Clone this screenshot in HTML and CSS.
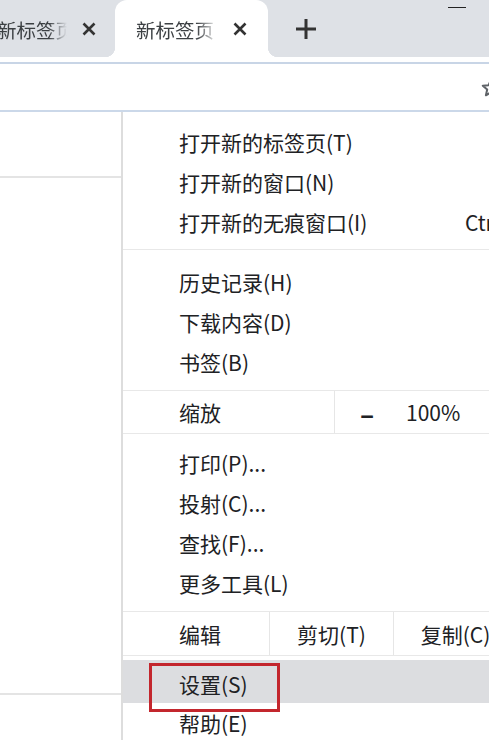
FILE: index.html
```html
<!DOCTYPE html>
<html lang="zh-CN">
<head>
<meta charset="utf-8">
<link rel="stylesheet" href="styles.css">
</head>
<body>
<div class="tabstrip">
  <div class="tab tab-inactive">
    <span class="title">新标签页</span>
    <svg class="close" viewBox="0 0 14 14" width="14" height="14"><path d="M1.5 1.5 L12.5 12.5 M12.5 1.5 L1.5 12.5" stroke="#333" stroke-width="2.6" stroke-linecap="butt"/></svg>
  </div>
  <div class="tab tab-active">
    <span class="title">新标签页</span>
    <svg class="close" viewBox="0 0 14 14" width="14" height="14"><path d="M1.5 1.5 L12.5 12.5 M12.5 1.5 L1.5 12.5" stroke="#333" stroke-width="2.6" stroke-linecap="butt"/></svg>
  </div>
  <div class="newtab">
    <svg viewBox="0 0 20 20" width="20" height="20"><path d="M10 0 V20 M0 10 H20" stroke="#333" stroke-width="3"/></svg>
  </div>
  <div class="spacer"></div>
  <div class="winctl"><span class="minimize"></span></div>
</div>
<div class="toolbar">
  <div class="omnibox">
    <svg class="star" viewBox="0 0 20 20" width="20" height="20"><path d="M10 1.8 L12.4 7.2 L18.2 7.7 L13.8 11.5 L15.1 17.3 L10 14.3 L4.9 17.3 L6.2 11.5 L1.8 7.7 L7.6 7.2 Z" fill="none" stroke="#5f6368" stroke-width="2" stroke-linejoin="round"/></svg>
  </div>
</div>
<div class="content">
  <div class="page">
    <div class="page-line first"></div>
    <div class="page-line second"></div>
  </div>
  <div class="menu">
    <div class="section first-section">
      <div class="item"><span class="label">打开新的标签页(T)</span><span class="shortcut">Ctrl+T</span></div>
      <div class="item"><span class="label">打开新的窗口(N)</span><span class="shortcut">Ctrl+N</span></div>
      <div class="item"><span class="label">打开新的无痕窗口(I)</span><span class="shortcut">Ctrl+Shift+N</span></div>
    </div>
    <div class="sep"></div>
    <div class="section second-section">
      <div class="item"><span class="label">历史记录(H)</span><span class="shortcut">▸</span></div>
      <div class="item"><span class="label">下载内容(D)</span><span class="shortcut">Ctrl+J</span></div>
      <div class="item"><span class="label">书签(B)</span><span class="shortcut">▸</span></div>
    </div>
    <div class="sep"></div>
    <div class="item zoom-row">
      <span class="cell cell-label zoom-label">缩放</span>
      <span class="cell zoom-minus">–</span>
      <span class="cell zoom-value">100%</span>
      <span class="cell zoom-plus">+</span>
    </div>
    <div class="sep"></div>
    <div class="section third-section">
      <div class="item"><span class="label">打印(P)...</span><span class="shortcut">Ctrl+P</span></div>
      <div class="item"><span class="label">投射(C)...</span></div>
      <div class="item"><span class="label">查找(F)...</span><span class="shortcut">Ctrl+F</span></div>
      <div class="item"><span class="label">更多工具(L)</span><span class="shortcut">▸</span></div>
    </div>
    <div class="sep"></div>
    <div class="item edit-row">
      <span class="cell cell-label edit-label">编辑</span>
      <span class="cell edit-btn">剪切(T)</span>
      <span class="cell edit-btn">复制(C)</span>
      <span class="cell edit-btn">粘贴(P)</span>
    </div>
    <div class="sep"></div>
    <div class="section last-section">
      <div class="item selected"><span class="label">设置(S)</span></div>
      <div class="item"><span class="label">帮助(E)</span><span class="shortcut">▸</span></div>
    </div>
  </div>
</div>
<div class="highlight-box"></div>
</body>
</html>
```
FILE: styles.css
```css
html, body {
  margin: 0;
  padding: 0;
  width: 489px;
  height: 740px;
  overflow: hidden;
  background: #ffffff;
  font-family: "Noto Sans CJK SC", "Noto Sans", sans-serif;
  color: #202124;
}

.tabstrip {
  height: 57px;
  background: #dee1e6;
  display: flex;
  align-items: stretch;
  position: relative;
}

.tab {
  display: flex;
  align-items: center;
  height: 57px;
  box-sizing: border-box;
  position: relative;
}

.title {
  font-size: 19.5px;
  color: #3c4043;
  white-space: nowrap;
  overflow: hidden;
  -webkit-mask-image: linear-gradient(to right, #000 74%, transparent 100%);
  mask-image: linear-gradient(to right, #000 74%, transparent 100%);
  line-height: 26px;
  padding-top: 2px;
}

.tab-inactive {
  width: 115px;
  padding-left: 0;
}

.tab-inactive .title {
  width: 70px;
  margin-left: -3px;
}

.tab-inactive .close {
  margin-left: 15px;
}

.tab-active {
  width: 153px;
  background: #ffffff;
  border-radius: 12px 12px 0 0;
  padding-left: 21px;
}

.tab-active::before,
.tab-active::after {
  content: "";
  position: absolute;
  bottom: 0;
  width: 10px;
  height: 10px;
}

.tab-active::before {
  left: -10px;
  background: radial-gradient(circle at 0 0, transparent 10px, #ffffff 10.5px);
}

.tab-active::after {
  right: -10px;
  background: radial-gradient(circle at 100% 0, transparent 10px, #ffffff 10.5px);
}

.tab-active .title {
  width: 82px;
}

.tab-active .close {
  margin-left: 15px;
}

.newtab {
  display: flex;
  align-items: center;
  padding-left: 28px;
  padding-top: 1px;
}

.spacer {
  flex: 1;
}

.winctl {
  width: 41px;
  position: relative;
}

.minimize {
  position: absolute;
  left: 0;
  top: 7px;
  width: 18px;
  height: 1px;
  background: #222;
}

.toolbar {
  height: 55px;
  padding-top: 5px;
  box-sizing: border-box;
  background: #ffffff;
}

.omnibox {
  height: 50px;
  box-sizing: border-box;
  border-top: 2px solid #c8d5e6;
  border-bottom: 2px solid #cbd8e9;
  display: flex;
  align-items: center;
  justify-content: flex-end;
  overflow: hidden;
  padding-top: 2px;
}

.star {
  margin-right: -12px;
  flex: none;
}

.content {
  display: flex;
  height: 628px;
}

.page {
  width: 121px;
  flex: none;
  position: relative;
}

.page-line {
  height: 2px;
  background: #e4e4e4;
  width: 121px;
}

.page-line.first {
  margin-top: 64px;
}

.page-line.second {
  margin-top: 515px;
}

.menu {
  flex: none;
  width: 520px;
  border-left: 2px solid #dddddd;
  box-sizing: border-box;
  background: #ffffff;
  font-size: 21px;
}

.section {
  display: flex;
  flex-direction: column;
}

.first-section {
  padding-top: 10px;
  padding-bottom: 7px;
}

.second-section {
  padding-top: 12px;
  padding-bottom: 8px;
}

.third-section {
  padding-top: 9px;
  padding-bottom: 8px;
}

.last-section {
  padding-top: 4px;
}

.item {
  height: 40px;
  display: flex;
  align-items: center;
  padding-left: 56px;
  padding-right: 57px;
  white-space: nowrap;
}

.label {
  flex: 1;
}

.shortcut {
  color: #202124;
}

.sep {
  height: 1px;
  background: #e8e8e8;
}

.zoom-row,
.edit-row {
  padding-left: 0;
  padding-right: 0;
  align-items: stretch;
}

.zoom-row {
  height: 42px;
}

.edit-row {
  height: 43px;
}

.cell {
  display: flex;
  align-items: center;
  flex: none;
}

.cell-label {
  padding-left: 56px;
  box-sizing: border-box;
}

.zoom-label {
  width: 212px;
  border-right: 1px solid #e6e6e6;
}

.zoom-minus {
  padding-left: 25px;
  width: 47px;
  font-size: 26px;
  font-weight: 700;
  box-sizing: border-box;
}

.zoom-value {
  padding-left: 24px;
}

.zoom-plus {
  padding-left: 30px;
}

.edit-label {
  width: 147px;
  border-right: 1px solid #e6e6e6;
}

.edit-btn {
  width: 124px;
  justify-content: center;
  border-right: 1px solid #e6e6e6;
  box-sizing: border-box;
}

.selected {
  background: #dcdde0;
  height: 43px;
}

.selected .label {
  padding-top: 5px;
}

.highlight-box {
  position: absolute;
  left: 149px;
  top: 663px;
  width: 131px;
  height: 49px;
  box-sizing: border-box;
  border: 3px solid #c3262d;
}
```
